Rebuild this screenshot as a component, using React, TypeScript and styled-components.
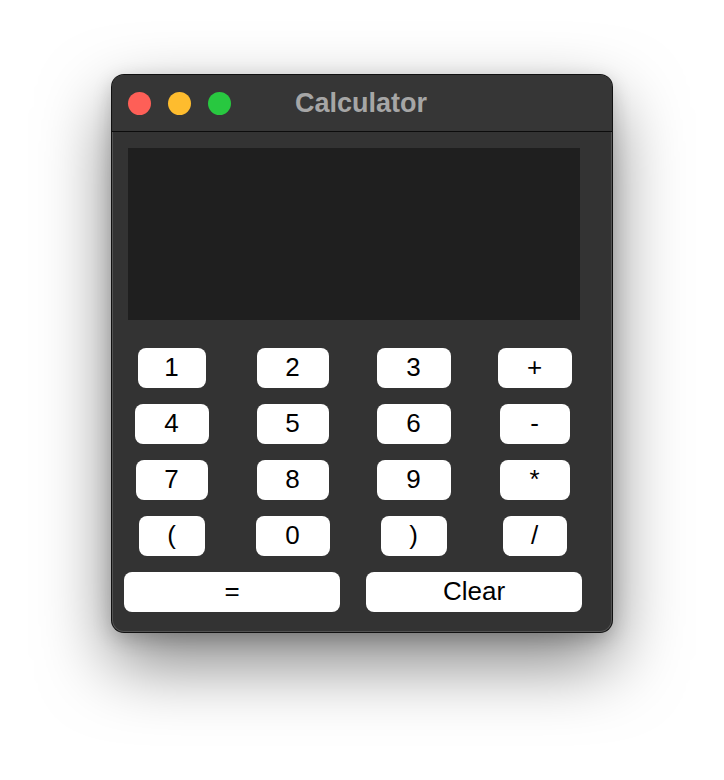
import styled, { createGlobalStyle } from 'styled-components';

const GlobalStyle = createGlobalStyle`
  html, body {
    margin: 0;
    padding: 0;
    background: #ffffff;
  }
  body {
    font-family: "Liberation Sans", Arial, sans-serif;
  }
`;

type Key = { label: string; width: number; span?: number };

const keys: Key[] = [
  { label: '1', width: 68 },
  { label: '2', width: 72 },
  { label: '3', width: 74 },
  { label: '+', width: 74 },
  { label: '4', width: 74 },
  { label: '5', width: 72 },
  { label: '6', width: 74 },
  { label: '-', width: 70 },
  { label: '7', width: 72 },
  { label: '8', width: 72 },
  { label: '9', width: 74 },
  { label: '*', width: 70 },
  { label: '(', width: 66 },
  { label: '0', width: 74 },
  { label: ')', width: 66 },
  { label: '/', width: 64 },
  { label: '=', width: 216, span: 2 },
  { label: 'Clear', width: 216, span: 2 },
];

const App = () => {
  return (
    <>
      <GlobalStyle />
      <Page>
        <Window>
          <TitleBar>
            <Lights>
              <Light color="#fe5f57" />
              <Light color="#febc2e" />
              <Light color="#28c840" />
            </Lights>
            <Title>Calculator</Title>
          </TitleBar>
          <Body>
            <Display />
            <Keypad>
              {keys.map((k) => (
                <Cell key={k.label} $span={k.span ?? 1}>
                  <KeyButton $width={k.width}>{k.label}</KeyButton>
                </Cell>
              ))}
            </Keypad>
          </Body>
        </Window>
      </Page>
    </>
  );
};

const Page = styled.div`
  width: 724px;
  height: 780px;
  display: flex;
  justify-content: center;
  align-items: flex-start;
  padding-top: 75px;
  box-sizing: border-box;
  overflow: hidden;
`;

const Window = styled.div`
  width: 500px;
  height: 557px;
  background: #333333;
  border-radius: 12px;
  overflow: hidden;
  box-shadow:
    inset 0 0 0 1px rgba(255, 255, 255, 0.16),
    0 0 0 1px #111111,
    0 30px 70px rgba(0, 0, 0, 0.5),
    0 6px 20px rgba(0, 0, 0, 0.2);
  display: flex;
  flex-direction: column;
`;

const TitleBar = styled.div`
  position: relative;
  height: 56px;
  background: #363636;
  border-bottom: 1px solid #0c0c0c;
  display: flex;
  align-items: center;
  justify-content: center;
`;

const Lights = styled.div`
  position: absolute;
  left: 16px;
  top: 17px;
  display: flex;
  gap: 17px;
`;

const Light = styled.div<{ color: string }>`
  width: 23px;
  height: 23px;
  border-radius: 50%;
  background: ${(p) => p.color};
`;

const Title = styled.div`
  font-family: "Liberation Sans", Arial, sans-serif;
  font-weight: bold;
  font-size: 27px;
  color: #a6a6a6;
  margin-top: 1px;
  margin-left: -2px;
`;

const Body = styled.div`
  padding: 16px 0 0 0;
  display: flex;
  flex-direction: column;
`;

const Display = styled.div`
  width: 452px;
  height: 172px;
  margin-left: 16px;
  background: #1f1f1f;
`;

const Keypad = styled.div`
  display: grid;
  grid-template-columns: repeat(4, 121px);
  grid-auto-rows: 40px;
  row-gap: 16px;
  margin-top: 28px;
  margin-left: -1px;
`;

const Cell = styled.div<{ $span: number }>`
  grid-column: span ${(p) => p.$span};
  display: flex;
  justify-content: center;
`;

const KeyButton = styled.button<{ $width: number }>`
  width: ${(p) => p.$width}px;
  height: 40px;
  border: none;
  border-radius: 8px;
  background: #ffffff;
  color: #000000;
  font-family: "Liberation Sans", Arial, sans-serif;
  font-size: 26px;
  line-height: 38px;
  padding: 0 0 2px;
  cursor: pointer;
`;

export default App;
